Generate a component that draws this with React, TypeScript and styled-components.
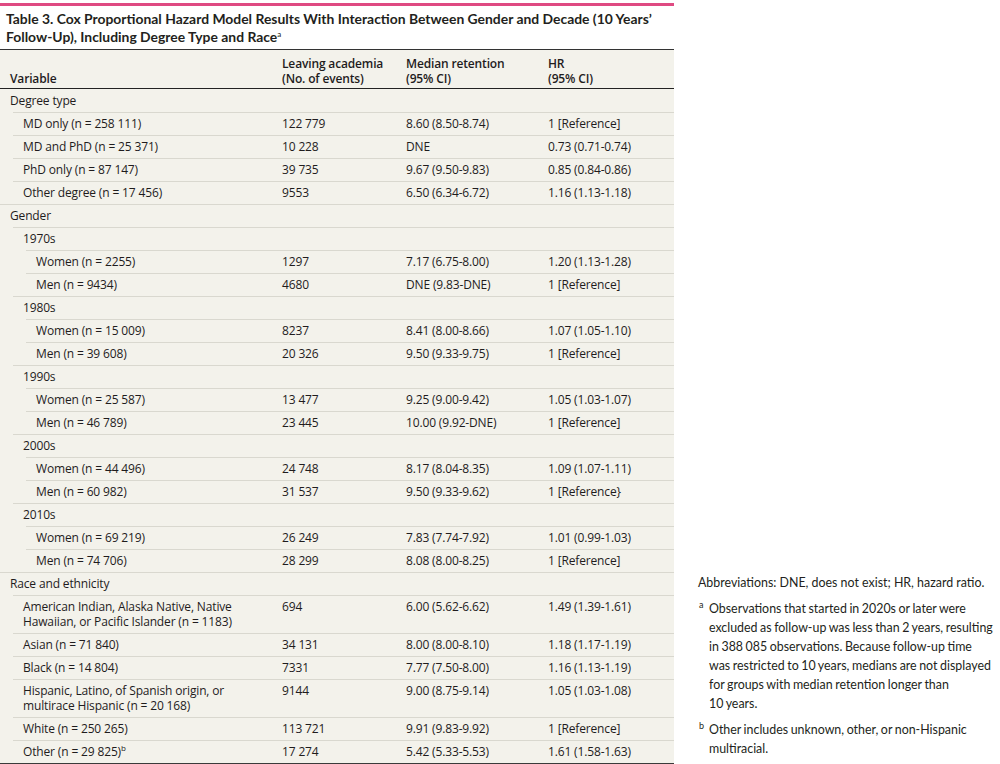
import React from "react";
import styled, { createGlobalStyle } from "styled-components";

const Global = createGlobalStyle`
  html, body { margin: 0; padding: 0; background: #ffffff; }
  body { font-family: "Open Sans", "Noto Sans", sans-serif; color: #231f20; }
`;

const Page = styled.div`
  display: flex;
  align-items: flex-end;
  width: 1000px;
  height: 764px;
  padding-top: 3px;
  box-sizing: border-box;
`;

const TableColumn = styled.div`
  width: 674px;
  flex: none;
  display: flex;
  flex-direction: column;
  align-self: stretch;
  & > * { flex: none; }
`;

const AccentBar = styled.div`
  height: 3px;
  background: #df4a82;
`;

const Title = styled.h1`
  margin: 0;
  padding: 4px 0 0 6px;
  height: 43px;
  box-sizing: border-box;
  font-family: Lato, "Noto Sans", sans-serif;
  font-size: 13.9px;
  line-height: 18px;
  font-weight: 700;
  white-space: nowrap;
  color: #231f20;
  sup { font-size: 8px; line-height: 0; vertical-align: 5px; font-weight: 400; }
`;

const Table = styled.table`
  border-collapse: collapse;
  width: 674px;
  table-layout: fixed;
  background: #f3f2eb;
  font-size: 12px;
  letter-spacing: -0.15px;
  line-height: 15px;
  color: #1f1c1d;
  border-top: 1px solid #333;
  border-bottom: 2px solid #3a3a3a;
`;

const HeadCell = styled.th<{ $w: number }>`
  width: ${(p) => p.$w}px;
  box-sizing: border-box;
  text-align: left;
  vertical-align: bottom;
  font-weight: 600;
  padding: 6px 0 2px 10px;
  border-bottom: 1px solid #222;
`;

const Cell = styled.td<{ $indent?: number }>`
  padding: 4px 0 4px ${(p) => 10 + (p.$indent ?? 0)}px;
  vertical-align: top;
  white-space: nowrap;
  background-image: linear-gradient(#d9d8cf, #d9d8cf);
  background-repeat: no-repeat;
  background-size: calc(100% - ${(p) => p.$indent ?? 0}px) 1px;
  background-position: right top;
  sup { font-size: 8px; line-height: 0; vertical-align: 5px; }
`;

const Row = styled.tr`
  &:first-child td { background-image: none; }
`;

const Notes = styled.div`
  flex: 1;
  padding: 0 0 6px 24px;
  font-family: Lato, "Noto Sans", sans-serif;
  font-size: 12.4px;
  line-height: 19px;
  white-space: nowrap;
  color: #231f20;
`;

const Note = styled.p<{ $hang?: boolean }>`
  margin: 0 0 7px;
  padding-left: ${(p) => (p.$hang ? 11 : 0)}px;
  text-indent: ${(p) => (p.$hang ? -10 : 0)}px;
  word-spacing: ${(p) => (p.$hang ? -0.6 : 0)}px;
  &:last-child { margin-bottom: 0; }
`;

const Mark = styled.sup`
  display: inline-block;
  width: 10px;
  text-indent: 0;
  font-size: 9px;
  line-height: 0;
  vertical-align: 5px;
`;

type R = { label: React.ReactNode; level: number; c2?: string; c3?: string; c4?: string };

const t = (s: string) => s.replace(/ (\d{3})\b/g, "\u00a0$1");

const rows: R[] = [
  { label: "Degree type", level: 0 },
  { label: t("MD only (n = 258 111)"), level: 1, c2: t("122 779"), c3: "8.60 (8.50-8.74)", c4: "1 [Reference]" },
  { label: t("MD and PhD (n = 25 371)"), level: 1, c2: t("10 228"), c3: "DNE", c4: "0.73 (0.71-0.74)" },
  { label: t("PhD only (n = 87 147)"), level: 1, c2: t("39 735"), c3: "9.67 (9.50-9.83)", c4: "0.85 (0.84-0.86)" },
  { label: t("Other degree (n = 17 456)"), level: 1, c2: "9553", c3: "6.50 (6.34-6.72)", c4: "1.16 (1.13-1.18)" },
  { label: "Gender", level: 0 },
  { label: "1970s", level: 1 },
  { label: "Women (n = 2255)", level: 2, c2: "1297", c3: "7.17 (6.75-8.00)", c4: "1.20 (1.13-1.28)" },
  { label: "Men (n = 9434)", level: 2, c2: "4680", c3: "DNE (9.83-DNE)", c4: "1 [Reference]" },
  { label: "1980s", level: 1 },
  { label: t("Women (n = 15 009)"), level: 2, c2: "8237", c3: "8.41 (8.00-8.66)", c4: "1.07 (1.05-1.10)" },
  { label: t("Men (n = 39 608)"), level: 2, c2: t("20 326"), c3: "9.50 (9.33-9.75)", c4: "1 [Reference]" },
  { label: "1990s", level: 1 },
  { label: t("Women (n = 25 587)"), level: 2, c2: t("13 477"), c3: "9.25 (9.00-9.42)", c4: "1.05 (1.03-1.07)" },
  { label: t("Men (n = 46 789)"), level: 2, c2: t("23 445"), c3: "10.00 (9.92-DNE)", c4: "1 [Reference]" },
  { label: "2000s", level: 1 },
  { label: t("Women (n = 44 496)"), level: 2, c2: t("24 748"), c3: "8.17 (8.04-8.35)", c4: "1.09 (1.07-1.11)" },
  { label: t("Men (n = 60 982)"), level: 2, c2: t("31 537"), c3: "9.50 (9.33-9.62)", c4: "1 [Reference}" },
  { label: "2010s", level: 1 },
  { label: t("Women (n = 69 219)"), level: 2, c2: t("26 249"), c3: "7.83 (7.74-7.92)", c4: "1.01 (0.99-1.03)" },
  { label: t("Men (n = 74 706)"), level: 2, c2: t("28 299"), c3: "8.08 (8.00-8.25)", c4: "1 [Reference]" },
  { label: "Race and ethnicity", level: 0 },
  {
    label: (
      <>
        American Indian, Alaska Native, Native
        <br />
        Hawaiian, or Pacific Islander (n = 1183)
      </>
    ),
    level: 1, c2: "694", c3: "6.00 (5.62-6.62)", c4: "1.49 (1.39-1.61)",
  },
  { label: t("Asian (n = 71 840)"), level: 1, c2: t("34 131"), c3: "8.00 (8.00-8.10)", c4: "1.18 (1.17-1.19)" },
  { label: t("Black (n = 14 804)"), level: 1, c2: "7331", c3: "7.77 (7.50-8.00)", c4: "1.16 (1.13-1.19)" },
  {
    label: (
      <>
        Hispanic, Latino, of Spanish origin, or
        <br />
        {t("multirace Hispanic (n = 20 168)")}
      </>
    ),
    level: 1, c2: "9144", c3: "9.00 (8.75-9.14)", c4: "1.05 (1.03-1.08)",
  },
  { label: t("White (n = 250 265)"), level: 1, c2: t("113 721"), c3: "9.91 (9.83-9.92)", c4: "1 [Reference]" },
  {
    label: (
      <>
        {t("Other (n = 29 825)")}
        <sup>b</sup>
      </>
    ),
    level: 1, c2: t("17 274"), c3: "5.42 (5.33-5.53)", c4: "1.61 (1.58-1.63)",
  },
];

export default function App() {
  return (
    <>
      <Global />
      <Page>
        <TableColumn>
          <AccentBar />
          <Title>
            Table 3. Cox Proportional Hazard Model Results With Interaction Between Gender and Decade (10 Years’
            <br />
            Follow-Up), Including Degree Type and Race<sup>a</sup>
          </Title>
          <Table>
            <thead>
              <tr>
                <HeadCell $w={272}>Variable</HeadCell>
                <HeadCell $w={124}>
                  Leaving academia
                  <br />
                  (No. of events)
                </HeadCell>
                <HeadCell $w={142}>
                  Median retention
                  <br />
                  (95% CI)
                </HeadCell>
                <HeadCell $w={136}>
                  HR
                  <br />
                  (95% CI)
                </HeadCell>
              </tr>
            </thead>
            <tbody>
              {rows.map((r, i) => (
                <Row key={i}>
                  <Cell $indent={r.level * 13}>{r.label}</Cell>
                  <Cell>{r.c2}</Cell>
                  <Cell>{r.c3}</Cell>
                  <Cell>{r.c4}</Cell>
                </Row>
              ))}
            </tbody>
          </Table>
        </TableColumn>
        <Notes>
          <Note>Abbreviations: DNE, does not exist; HR, hazard ratio.</Note>
          <Note $hang>
            <Mark>a</Mark>Observations that started in 2020s or later were
            <br />
            excluded as follow-up was less than 2 years, resulting
            <br />
            in 388{"\u00a0"}085 observations. Because follow-up time
            <br />
            was restricted to 10 years, medians are not displayed
            <br />
            for groups with median retention longer than
            <br />
            10 years.
          </Note>
          <Note $hang>
            <Mark>b</Mark>Other includes unknown, other, or non-Hispanic
            <br />
            multiracial.
          </Note>
        </Notes>
      </Page>
    </>
  );
}
